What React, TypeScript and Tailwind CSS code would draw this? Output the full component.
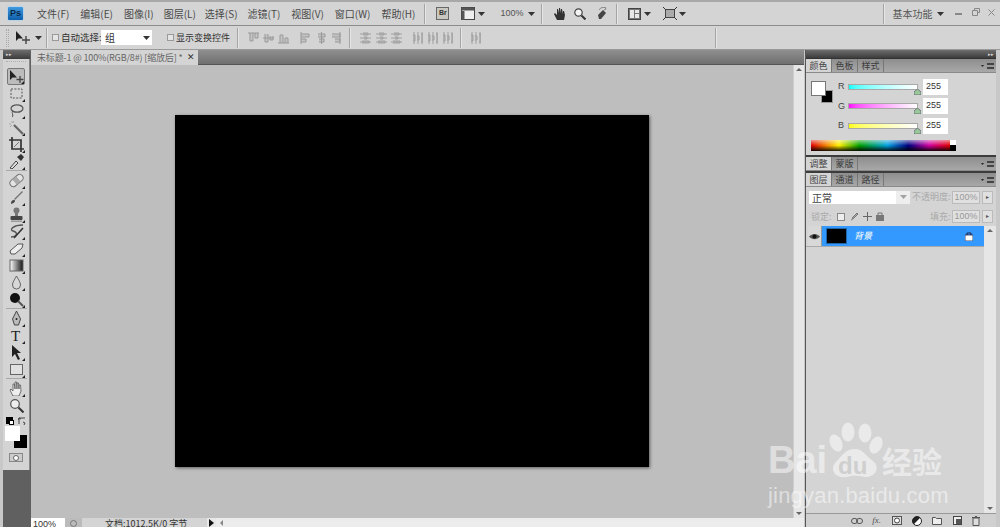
import React from 'react';

const cjk = { fontFamily: '"Noto Sans CJK SC", "Liberation Sans", sans-serif' };

const Caret = ({ className = '' }: { className?: string }) => (
  <svg width="7" height="4" viewBox="0 0 7 4" className={className}>
    <path d="M0 0h7L3.5 4z" fill="#333" />
  </svg>
);

const Divider = ({ className = '' }: { className?: string }) => (
  <div className={`w-px h-[20px] bg-[#a4a4a4] border-r border-[#e6e6e6] box-content ${className}`} />
);

const menus: [string, string][] = [
  ['文件(F)', 'ml-[13px]'],
  ['编辑(E)', 'ml-[11px]'],
  ['图像(I)', 'ml-[11px]'],
  ['图层(L)', 'ml-[10px]'],
  ['选择(S)', 'ml-[9px]'],
  ['滤镜(T)', 'ml-[10px]'],
  ['视图(V)', 'ml-[11px]'],
  ['窗口(W)', 'ml-[11px]'],
  ['帮助(H)', 'ml-[11px]'],
];

const AlignIcon = ({ v, className = '' }: { v: number; className?: string }) => (
  <svg width="11" height="12" viewBox="0 0 11 12" className={className}>
    {v === 0 && <path d="M0 1h11M2 1v8h3V1M7 1v5h3V1" stroke="#999" fill="#c4c4c4" />}
    {v === 1 && <path d="M0 6h11M2 2v8h3V2M7 4v4h3V4" stroke="#999" fill="#c4c4c4" />}
    {v === 2 && <path d="M0 11h11M2 11V3h3v8M7 11V6h3v5" stroke="#999" fill="#c4c4c4" />}
    {v === 3 && <path d="M1 0v12M1 2h8v3H1M1 7h5v3H1" stroke="#999" fill="#c4c4c4" />}
    {v === 4 && <path d="M5.5 0v12M2 2h7v3H2M3 7h5v3H3" stroke="#999" fill="#c4c4c4" />}
    {v === 5 && <path d="M10 0v12M2 2h8v3H2M5 7h5v3H5" stroke="#999" fill="#c4c4c4" />}
    {v === 6 && <path d="M0 2h11M0 6h11M0 10h11M3 1h5v2H3M4 5h3v2H4M2 9h7v2H2" stroke="#a0a0a0" fill="#c4c4c4" />}
    {v === 7 && <path d="M2 0v12M6 0v12M10 0v12M1 3h2v6H1M5 4h2v4H5M9 2h2v8H9" stroke="#a0a0a0" fill="#c4c4c4" />}
  </svg>
);

const TitleBar = () => (
  <div className="h-[25px] shrink-0 flex items-center bg-[#d4d4d4] border-t-2 border-[#a8a8a8] relative">
    <div className="ml-[7px] w-[17px] h-[15px] rounded-[2px] bg-gradient-to-b from-[#3f9ae0] to-[#0c5ea8] border border-[#b9d2e6] flex items-center justify-center text-[9px] font-bold text-[#0b2a48] font-['Liberation_Sans']">
      Ps
    </div>
    {menus.map(([label, cls]) => (
      <span key={label} style={cjk} className={`text-[10px] text-[#4a4a4a] whitespace-nowrap ${cls}`}>
        {label}
      </span>
    ))}
    <Divider className="ml-[9px]" />
    <div className="ml-[10px] w-[13px] h-[13px] border border-[#666] bg-[#c8c8c0] flex items-center justify-center text-[7px] font-bold text-[#333] font-['Liberation_Sans']">
      Br
    </div>
    <svg width="14" height="13" viewBox="0 0 14 13" className="ml-[12px]">
      <rect x="0.5" y="0.5" width="13" height="12" fill="#eee" stroke="#444" />
      <rect x="0.5" y="0.5" width="13" height="3" fill="#555" />
      <rect x="0.5" y="4" width="3" height="9" fill="#555" />
    </svg>
    <Caret className="ml-[3px]" />
    <span className="ml-[15px] text-[9px] text-[#555] font-['Liberation_Sans']">100%</span>
    <Caret className="ml-[5px]" />
    <Divider className="ml-[6px]" />
    <svg width="12" height="13" viewBox="0 0 12 13" className="ml-[11px]">
      <path d="M3 13 0 7l1-1 2 2V2l1 0 1 4V1h1l1 5V2h1l1 5V4h1l1 4-1 5z" fill="#333" />
    </svg>
    <svg width="12" height="12" viewBox="0 0 12 12" className="ml-[8px]">
      <circle cx="4.5" cy="4.5" r="3.7" fill="#f4f4f4" stroke="#444" strokeWidth="1.2" />
      <path d="M7.5 7.5 11.5 11.5" stroke="#333" strokeWidth="2" />
    </svg>
    <svg width="12" height="14" viewBox="0 0 12 14" className="ml-[10px]">
      <path d="M2 8l5-5 3 3-5 6H3z" fill="#444" />
      <path d="M3 3a5 5 0 0 1 7-2M9 0l1 2-2 1" stroke="#888" fill="none" />
    </svg>
    <Divider className="ml-[8px]" />
    <svg width="13" height="12" viewBox="0 0 13 12" className="ml-[10px]">
      <rect x="0.5" y="0.5" width="12" height="11" fill="#777" stroke="#444" />
      <rect x="2" y="2" width="4" height="8" fill="#e8e8e8" />
      <rect x="7" y="2" width="4" height="3" fill="#e8e8e8" />
      <rect x="7" y="6" width="4" height="4" fill="#e8e8e8" />
    </svg>
    <Caret className="ml-[3px]" />
    <svg width="14" height="13" viewBox="0 0 14 13" className="ml-[12px]">
      <rect x="2.5" y="2.5" width="9" height="8" fill="#aaa" stroke="#444" />
      <path d="M0 0l3 3M14 0l-3 3M0 13l3-3M14 13l-3-3" stroke="#333" />
    </svg>
    <Caret className="ml-[2px]" />
    <Divider className="ml-[197px]" />
    <span style={cjk} className="ml-[7px] text-[10px] text-[#555] whitespace-nowrap">基本功能</span>
    <Caret className="ml-[5px]" />
    <div className="ml-[11px] w-[7px] h-[2px] bg-[#888]" />
    <svg width="8" height="8" viewBox="0 0 8 8" className="ml-[10px] -mt-[3px]">
      <path d="M2.5 2V.5h5v4H6M.5 2.5h5v5h-5z" stroke="#888" fill="none" />
    </svg>
    <svg width="7" height="7" viewBox="0 0 7 7" className="ml-[8px] -mt-[3px]">
      <path d="M.5.5l6 6M6.5.5l-6 6" stroke="#888" />
    </svg>
  </div>
);

const OptionsBar = () => (
  <div className="h-[25px] shrink-0 flex items-center bg-[#d4d4d4] border-t border-b border-t-[#8c8c8c] border-b-[#9a9a9a]">
    <div className="ml-[6px] w-[3px] h-[18px] border-x border-dotted border-[#aaa]" />
    <svg width="14" height="13" viewBox="0 0 14 13" className="ml-[7px]">
      <path d="M0 0v10l2.5-2.5H7z" fill="#222" />
      <path d="M10 5v8M6 9h8" stroke="#444" strokeWidth="1.4" />
    </svg>
    <Caret className="ml-[5px]" />
    <Divider className="ml-[4px]" />
    <div className="ml-[4px] w-[7px] h-[7px] bg-[#e4e4e4] border border-[#999]" />
    <span style={cjk} className="ml-[2px] w-[40px] text-[9.5px] text-[#333] whitespace-nowrap">自动选择:</span>
    <div className="w-[51px] h-[15px] bg-white flex items-center justify-between pl-[4px] pr-[2px]">
      <span style={cjk} className="text-[10px] text-[#333]">组</span>
      <Caret />
    </div>
    <div className="ml-[15px] w-[7px] h-[7px] bg-[#e4e4e4] border border-[#999]" />
    <span style={cjk} className="ml-[2px] text-[9px] text-[#333] whitespace-nowrap">显示变换控件</span>
    <Divider className="ml-[7px]" />
    <AlignIcon v={0} className="ml-[9px]" />
    <AlignIcon v={1} className="ml-[4px]" />
    <AlignIcon v={2} className="ml-[4px]" />
    <AlignIcon v={3} className="ml-[11px]" />
    <AlignIcon v={4} className="ml-[5px]" />
    <AlignIcon v={5} className="ml-[3px]" />
    <Divider className="ml-[8px]" />
    <AlignIcon v={6} className="ml-[9px]" />
    <AlignIcon v={6} className="ml-[5px]" />
    <AlignIcon v={6} className="ml-[4px]" />
    <AlignIcon v={7} className="ml-[10px]" />
    <AlignIcon v={7} className="ml-[4px]" />
    <AlignIcon v={7} className="ml-[4px]" />
    <Divider className="ml-[7px]" />
    <AlignIcon v={7} className="ml-[8px]" />
    <Divider className="ml-[234px]" />
  </div>
);

// each tool icon is a 15x15 drawing
const tools: { d: React.ReactNode; sep?: boolean; active?: boolean; noFlyout?: boolean }[] = [
  { active: true, d: <><path d="M1 1v10l2.5-2.5H8z" fill="#222" /><path d="M11 7v7M7.5 10.5h7" stroke="#444" strokeWidth="1.3" /></> },
  { d: <rect x="2" y="3" width="11" height="9" fill="none" stroke="#555" strokeDasharray="2 1.4" /> },
  { d: <><ellipse cx="8" cy="5.5" rx="6" ry="3.7" fill="none" stroke="#555" strokeWidth="1.2" /><path d="M3.5 8c-1 2 1 3 0 6" stroke="#555" fill="none" /></> },
  { d: <><path d="M5 5l9 9" stroke="#666" strokeWidth="2.2" /><path d="M3 1v2M0 4h2M5 1 4 3M1 7l2-2" stroke="#aaa" /></> },
  { d: <><path d="M3 0v12h12M0 3h12v12" stroke="#333" strokeWidth="1.7" fill="none" /><path d="M5 10l5-5" stroke="#777" /></> },
  { sep: true, d: <><path d="M1 14l6-7 2 2-6 6z" fill="#ddd" stroke="#444" /><path d="M8 3l4-3 3 3-3 4z" fill="#333" /></> },
  { d: <><g transform="rotate(-40 7.5 7.5)"><rect x="0" y="4" width="15" height="7" rx="3.5" fill="#e4e4e4" stroke="#777" /><rect x="5" y="4" width="5" height="7" fill="#aaa" /></g></> },
  { d: <><path d="M2 14c0-3 1-4 3-4s1 3-3 4z" fill="#444" /><path d="M5 9l8-8 1 1-8 8z" fill="#777" /></> },
  { d: <><circle cx="7.5" cy="3.5" r="3" fill="#777" /><rect x="6" y="6" width="3" height="4" fill="#777" /><rect x="1.5" y="9" width="12" height="4" rx="1" fill="#444" /><rect x="2" y="13.5" width="11" height="1.5" fill="#999" /></> },
  { d: <><path d="M2 13c8-1 6-5 2-6s0-6 10-6" fill="none" stroke="#555" strokeWidth="1.3" /><path d="M5 14 14 4" stroke="#333" strokeWidth="1.6" /></> },
  { d: <path d="M1 10 9 3h5l-1 4-7 6H2z" fill="#eee" stroke="#555" /> },
  { d: <><defs><linearGradient id="grad"><stop offset="0" stopColor="#fff" /><stop offset="1" stopColor="#111" /></linearGradient></defs><rect x="1" y="2" width="13" height="11" fill="url(#grad)" stroke="#666" /></> },
  { d: <path d="M7.5 1c-2 4-4 6-4 9a4 4 0 0 0 8 0c0-3-2-5-4-9z" fill="#d8d8d8" stroke="#666" /> },
  { sep: true, d: <><circle cx="6" cy="6" r="5" fill="#111" /><path d="M9 9l5 5" stroke="#555" strokeWidth="2" /></> },
  { d: <><path d="M7.5 0l4 8-2 6h-4l-2-6z" fill="#bbb" stroke="#444" /><circle cx="7.5" cy="8" r="1" fill="#222" /></> },
  { d: <text x="2" y="13" fontSize="15" fontFamily="Liberation Serif" fill="#222">T</text> },
  { d: <path d="M3 0v12l3-3 3 6 2-1-3-6h4z" fill="#222" /> },
  { sep: true, d: <rect x="1.5" y="2.5" width="12" height="10" fill="#e0e0e0" stroke="#666" /> },
  { d: <path d="M4 15 1 9l1-1 2 2V3l1.500 0L6 8V1h1.500L8 8V2h1.500l.5 6V4h1.500l.5 6-2 5z" fill="#eee" stroke="#555" strokeWidth=".8" /> },
  { noFlyout: true, d: <><circle cx="6" cy="6" r="4.3" fill="#eee" stroke="#555" strokeWidth="1.2" /><path d="M9.500 9.500l5 5" stroke="#333" strokeWidth="2" /></> },
];

const ToolBox = () => (
  <div className="flex flex-col shrink-0 w-[27px] h-full bg-[#606060]">
    <div className="h-[9px] bg-gradient-to-b from-[#6e6e6e] to-[#3c3c3c] flex items-center pl-[3px]">
      <span className="text-[5px] leading-none text-[#ddd]">▸▸</span>
    </div>
    <div className="bg-[#d4d4d4] border-r border-[#8a8a8a] flex flex-col items-center pb-[8px]">
      <div className="h-[9px] w-[20px] border-t border-dotted border-[#b0b0b0] translate-y-[2px]" />
      {tools.map((t, i) => (
        <React.Fragment key={i}>
          <div className={`relative w-[18px] h-[17px] flex items-center justify-center ${t.active ? 'bg-[#bcbcbc] border border-[#777] rounded-[2px]' : ''}`}>
            <svg width="15" height="15" viewBox="0 0 15 15">{t.d}</svg>
            {!t.noFlyout && <span className="absolute right-0 bottom-0 w-0 h-0 border-l-[3px] border-l-transparent border-b-[3px] border-b-[#222]" />}
          </div>
          {t.sep && <div className="w-[21px] h-px bg-[#a8a8a8] mb-[1px]" />}
        </React.Fragment>
      ))}
      <div className="w-[20px] h-[9px] mt-[2px] flex items-center justify-between">
        <div className="relative w-[7px] h-[7px] bg-black"><div className="absolute left-[3px] top-[3px] w-[5px] h-[5px] bg-white border border-black" /></div>
        <svg width="8" height="8" viewBox="0 0 8 8"><path d="M1 7V1h6M0 3l1-2 2 1M6 8l1-2-2-1" stroke="#444" fill="none" /></svg>
      </div>
      <div className="relative w-[22px] h-[22px] mt-[1px]">
        <div className="absolute right-0 bottom-0 w-[13px] h-[13px] bg-black" />
        <div className="absolute left-0 top-0 w-[15px] h-[15px] bg-white" />
      </div>
      <div className="mt-[5px] w-[14px] h-[9px] border border-[#888] bg-[#ccc] flex items-center justify-center">
        <div className="w-[6px] h-[6px] rounded-full bg-white border border-[#666]" />
      </div>
    </div>
  </div>
);

const Document = () => (
  <div className="flex-1 min-w-0 flex flex-col h-full">
    <div className="h-[15px] shrink-0 flex bg-gradient-to-b from-[#8f8f8f] to-[#707070] border-b border-[#555]">
      <div className="w-[167px] h-[15px] bg-[#d4d4d4] flex items-center pl-[6px]">
        <span style={cjk} className="text-[9px] tracking-[-0.15px] text-[#666] whitespace-nowrap">未标题-1 @ 100%(RGB/8#) [缩放后] *</span>
        <span className="ml-[4px] text-[9px] text-[#333] font-['Liberation_Sans']">✕</span>
      </div>
    </div>
    <div className="flex-1 min-h-0 flex bg-[#bebebe]">
      <div className="flex-1 min-w-0 pt-[50px] pl-[144px]">
        <div className="w-[474px] h-[352px] bg-black shadow-[1px_1px_3px_rgba(0,0,0,0.5)]" />
      </div>
      <div className="w-[11px] bg-[#e6e6e6] border-l border-[#cfcfcf] flex flex-col items-center justify-between pt-[3px] pb-[3px]">
        <svg width="6" height="3" viewBox="0 0 6 3"><path d="M3 0l3 3H0z" fill="#666" /></svg>
        <svg width="6" height="3" viewBox="0 0 6 3"><path d="M0 0h6L3 3z" fill="#666" /></svg>
      </div>
    </div>
    <div className="h-[9px] shrink-0 flex items-start bg-[#d0d0d0]">
      <div className="w-[34px] h-full bg-white text-[9px] leading-[12px] text-[#333] pl-[2px] font-['Liberation_Sans']">100%</div>
      <div className="w-[17px] h-full bg-[#bbb] flex justify-center pt-[2px]">
        <div className="w-[7px] h-[7px] rounded-full border border-[#777]" />
      </div>
      <div style={cjk} className="w-[125px] h-full bg-[#d4d4d4] text-[9px] leading-[11px] text-[#333] pl-[23px] whitespace-nowrap overflow-hidden">文档:1012.5K/0 字节</div>
      <div className="w-[9px] h-full bg-[#e8e8e8] flex justify-center pt-[1px]">
        <svg width="5" height="8" viewBox="0 0 5 8"><path d="M0 0l5 4-5 4z" fill="#111" /></svg>
      </div>
      <div className="flex-1 h-full bg-[#ececec] flex items-center pl-[4px]">
        <svg width="3" height="6" viewBox="0 0 3 6"><path d="M3 0v6L0 3z" fill="#888" /></svg>
      </div>
    </div>
  </div>
);

const PanelTabs = ({ tabs }: { tabs: string[] }) => (
  <div className="h-[14px] shrink-0 flex bg-gradient-to-b from-[#8e8e8e] to-[#a8a8a8] border-b border-[#8a8a8a]">
    {tabs.map((t, i) => (
      <div key={t} style={cjk} className={`w-[26px] flex items-center justify-center text-[9px] border-r border-[#777] ${i === 0 ? 'bg-[#d4d4d4] text-[#444]' : 'text-[#3c3c3c]'}`}>
        {t}
      </div>
    ))}
    <div className="ml-auto mr-[2px] flex items-center gap-[1px]">
      <Caret className="scale-50" />
      <div className="w-[7px] h-[6px] border-y-2 border-[#444] bg-[#999]" />
    </div>
  </div>
);

const Slider = ({ label, grad }: { label: string; grad: string }) => (
  <div className="h-[19.5px] flex items-center">
    <span className="w-[10px] text-[9px] text-[#444] font-['Liberation_Sans']">{label}</span>
    <div className="relative w-[70px] h-[6px] border border-[#a8a8a8]" >
      <div className={`absolute inset-0 bg-gradient-to-r ${grad} to-white`} />
      <svg width="7" height="6" viewBox="0 0 7 6" className="absolute -right-[4px] top-[4px]">
        <path d="M3.500 0 7 3v3H0V3z" fill="#9bc89b" stroke="#556" strokeWidth=".7" />
      </svg>
    </div>
    <div className="ml-[5px] w-[25px] h-[16px] bg-white text-[9px] leading-[15px] pl-[3px] text-[#333] font-['Liberation_Sans']">255</div>
  </div>
);

const ColorPanel = () => (
  <div className="h-[82px] shrink-0 bg-[#d4d4d4] relative">
    <div className="flex pt-[4px] pl-[5px]">
      <div className="relative w-[22px] h-[25px] mt-[4px]">
        <div className="absolute left-[10px] top-[9px] w-[12px] h-[13px] bg-black border border-[#999]" />
        <div className="absolute left-0 top-0 w-[15px] h-[15px] bg-white border border-[#777]" />
      </div>
      <div className="ml-[5px] flex flex-col">
        <Slider label="R" grad="from-[#00ffff]" />
        <Slider label="G" grad="from-[#ff00ff]" />
        <Slider label="B" grad="from-[#ffff00]" />
      </div>
    </div>
    <div className="flex ml-[5px] mt-[4px] h-[11px] w-[145px]">
      <div className="w-[139px] bg-[linear-gradient(to_bottom,rgba(255,255,255,0.55),transparent_50%,rgba(0,0,0,0.9)),linear-gradient(to_right,#e00000,#ffee00_20%,#00a000_35%,#00a0e0_55%,#000080_70%,#d000a0_85%,#e00000)]" />
      <div className="w-[6px] flex flex-col"><div className="h-1/2 bg-white" /><div className="h-1/2 bg-black" /></div>
    </div>
  </div>
);

const LayersPanel = () => (
  <div className="flex-1 min-h-0 bg-[#d4d4d4] flex flex-col">
    <div className="h-[20px] shrink-0 flex items-center pl-[3px]">
      <div style={cjk} className="w-[87px] h-[13px] bg-white text-[10px] leading-[13px] pl-[3px] text-[#444]">正常</div>
      <div className="w-[14px] h-[13px] bg-[#eee] flex items-center justify-center"><Caret className="opacity-40" /></div>
      <span style={cjk} className="ml-[2px] w-[40px] text-[9px] text-[#aaa] whitespace-nowrap">不透明度:</span>
      <div className="w-[28px] h-[13px] bg-[#e0e0e0] border border-[#bbb] text-[9px] leading-[11px] text-center text-[#999] font-['Liberation_Sans']">100%</div>
      <div className="ml-[2px] w-[11px] h-[13px] bg-[#e0e0e0] border border-[#bbb] text-[6px] leading-[11px] text-center text-[#555]">▸</div>
    </div>
    <div className="h-[19px] shrink-0 flex items-center pl-[5px]">
      <span style={cjk} className="w-[26px] text-[9px] text-[#aaa]">锁定:</span>
      <div className="w-[8px] h-[8px] bg-[#eee] border border-[#888]" />
      <svg width="9" height="9" viewBox="0 0 9 9" className="ml-[5px]"><path d="M1 8c2 0 2-2 1-2l5-5 1 1-5 5" stroke="#777" fill="#aaa" /></svg>
      <svg width="9" height="9" viewBox="0 0 9 9" className="ml-[4px]"><path d="M4.500 0v9M0 4.500h9" stroke="#666" /></svg>
      <svg width="8" height="9" viewBox="0 0 8 9" className="ml-[4px]"><rect y="3" width="8" height="6" fill="#777" /><path d="M2 3V1h4v2" stroke="#777" fill="none" /></svg>
      <span style={cjk} className="ml-[46px] w-[22px] text-[9px] text-[#aaa] whitespace-nowrap">填充:</span>
      <div className="w-[28px] h-[13px] bg-[#e0e0e0] border border-[#bbb] text-[9px] leading-[11px] text-center text-[#999] font-['Liberation_Sans']">100%</div>
      <div className="ml-[2px] w-[11px] h-[13px] bg-[#e0e0e0] border border-[#bbb] text-[6px] leading-[11px] text-center text-[#555]">▸</div>
    </div>
    <div className="flex-1 min-h-0 flex">
      <div className="flex-1 min-w-0 flex flex-col">
        <div className="h-[21px] flex items-stretch border-b border-[#aaa]">
          <div className="w-[14px] ml-[2px] bg-[#d8d8d8] border-r border-[#999] flex items-center justify-center">
            <svg width="11" height="7" viewBox="0 0 11 7"><path d="M0 3.500C3 0 8 0 11 3.500 8 7 3 7 0 3.500z" fill="#555" /><circle cx="5.500" cy="3.500" r="2" fill="#111" /></svg>
          </div>
          <div className="flex-1 bg-[#3399ff] flex items-center pl-[4px]">
            <div className="w-[21px] h-[16px] bg-black border border-[#2266aa]" />
            <span style={cjk} className="ml-[7px] text-[9px] italic text-white">背景</span>
            <svg width="8" height="9" viewBox="0 0 8 9" className="ml-auto mr-[11px]">
              <rect y="3" width="8" height="6" fill="#fff" stroke="#224" strokeWidth=".8" />
              <path d="M2 3V1h4v2" stroke="#224" fill="none" />
            </svg>
          </div>
        </div>
      </div>
      <div className="w-[12px] bg-[#e6e6e6] flex flex-col items-center justify-between py-[3px]">
        <svg width="6" height="3" viewBox="0 0 6 3"><path d="M3 0l3 3H0z" fill="#666" /></svg>
        <svg width="6" height="3" viewBox="0 0 6 3"><path d="M0 0h6L3 3z" fill="#666" /></svg>
      </div>
    </div>
    <div className="h-[14px] shrink-0 bg-[#d0d0d0] border-t border-[#999] flex items-center justify-end pr-[16px] gap-[9px]">
      <svg width="12" height="6" viewBox="0 0 12 6"><rect x=".5" y=".5" width="6" height="5" rx="2.500" fill="none" stroke="#555" /><rect x="5.500" y=".5" width="6" height="5" rx="2.500" fill="none" stroke="#555" /></svg>
      <span className="text-[9px] italic text-[#555] font-['Liberation_Serif']">fx.</span>
      <svg width="10" height="9" viewBox="0 0 10 9" className="ml-[2px]"><rect x=".5" y=".5" width="9" height="8" fill="#ddd" stroke="#555" /><circle cx="5" cy="4.500" r="2.500" fill="#fff" stroke="#444" /></svg>
      <svg width="10" height="10" viewBox="0 0 10 10" className="ml-[1px]"><circle cx="5" cy="5" r="4.500" fill="#fff" stroke="#222" /><path d="M5 .5a4.500 4.500 0 0 0-3.200 7.700L8.200 1.800A4.500 4.500 0 0 0 5 .5z" fill="#222" /></svg>
      <svg width="10" height="8" viewBox="0 0 10 8" className="ml-[1px]"><path d="M.5 7.500V.5h3l1 1h5v6z" fill="#eee" stroke="#555" /></svg>
      <svg width="9" height="9" viewBox="0 0 9 9" className="ml-[2px]"><rect x=".5" y=".5" width="8" height="8" fill="#eee" stroke="#444" /><rect x="3" y="3" width="5" height="5" fill="#555" /></svg>
      <svg width="8" height="10" viewBox="0 0 8 10" className="ml-[1px]"><path d="M1 2h6v7.500H1zM0 1.500h8M3 .5h2" fill="#ddd" stroke="#555" /></svg>
    </div>
  </div>
);

const RightDock = () => (
  <div className="w-[191px] ml-[1px] shrink-0 h-full flex flex-col border-l border-[#555]">
    <div className="h-[9px] shrink-0 bg-gradient-to-b from-[#6e6e6e] to-[#3c3c3c] flex items-center justify-end pr-[2px] border-b border-[#333]">
      <span className="text-[5px] leading-none text-[#ddd]">▸▸</span>
    </div>
    <PanelTabs tabs={['颜色', '色板', '样式']} />
    <ColorPanel />
    <div className="h-[2px] shrink-0 bg-[#3c3c3c]" />
    <PanelTabs tabs={['调整', '蒙版']} />
    <div className="h-[2px] shrink-0 bg-[#3c3c3c]" />
    <PanelTabs tabs={['图层', '通道', '路径']} />
    <LayersPanel />
  </div>
);

// Baidu watermark sits over everything in the bottom right corner
const Watermark = () => (
  <div className="absolute left-[765px] top-[418px] w-[190px] h-[100px] pointer-events-none text-white/50">
    <span className="absolute left-[3px] top-[21px] text-[38px] leading-[42px] font-bold font-['Liberation_Sans']">Bai</span>
    <svg width="60" height="62" viewBox="0 0 60 62" className="absolute left-[58px] top-[3px]">
      <g fill="#fff" fillOpacity="0.5">
        <ellipse cx="13" cy="22" rx="6" ry="9" transform="rotate(-25 13 22)" />
        <ellipse cx="25" cy="11" rx="6.500" ry="9.500" />
        <ellipse cx="42" cy="12" rx="6.500" ry="9.500" />
        <ellipse cx="53" cy="24" rx="6" ry="9" transform="rotate(25 53 24)" />
        <path d="M32 28c8 0 12 8 18 12 8 6 2 17-8 16-6-1-12-2-18 0-10 2-18-6-12-14 6-6 10-14 20-14z" />
      </g>
    </svg>
    <span className="absolute left-[73px] top-[34px] text-[24px] leading-[28px] font-bold text-[#cfcfcf] font-['Liberation_Sans']">du</span>
    <span style={cjk} className="absolute left-[117px] top-[24px] text-[30px] leading-[36px] font-bold whitespace-nowrap">经验</span>
    <span className="absolute left-[3px] top-[64px] text-[22px] leading-[28px] tracking-[0.2px] whitespace-nowrap font-['Liberation_Sans']">jingyan.baidu.com</span>
  </div>
);

export default function App() {
  return (
    <div className="relative w-[1000px] h-[527px] overflow-hidden flex flex-col bg-[#d4d4d4]">
      <TitleBar />
      <OptionsBar />
      <div className="flex-1 min-h-0 flex pl-[3px] pr-[4px] bg-[#c8c8c8]">
        <ToolBox />
        <div className="w-px bg-[#606060]" />
        <Document />
        <RightDock />
      </div>
      <Watermark />
    </div>
  );
}
